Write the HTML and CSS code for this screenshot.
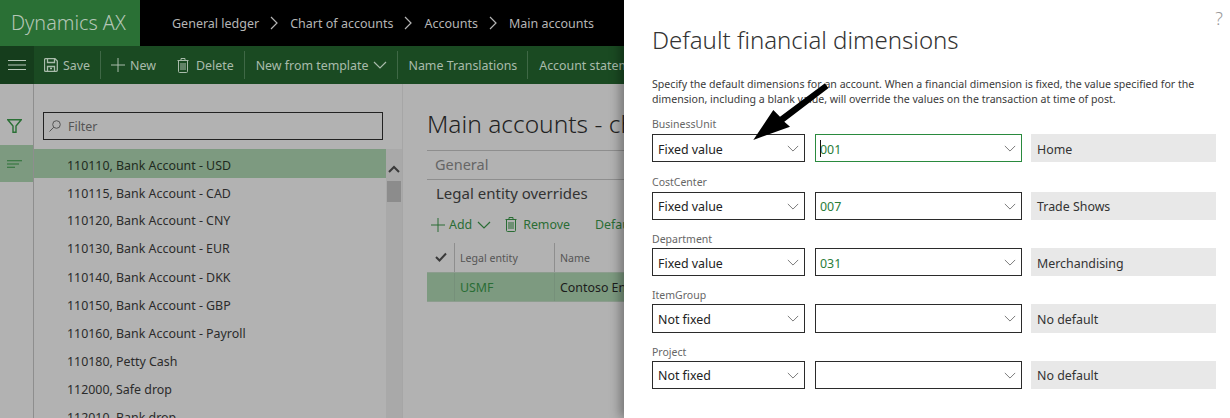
FILE: index.html
```html
<!DOCTYPE html>
<html lang="en">
<head>
<meta charset="utf-8">
<title>Default financial dimensions</title>
<link rel="stylesheet" href="styles.css">
</head>
<body>
<div class="app">
  <header class="topbar">
    <div class="brand">Dynamics AX</div>
    <nav class="crumbs">
      <span>General ledger</span>
      <svg class="crumb-sep" viewBox="0 0 10 14"><path d="M2 1l6 6-6 6"/></svg>
      <span>Chart of accounts</span>
      <svg class="crumb-sep" viewBox="0 0 10 14"><path d="M2 1l6 6-6 6"/></svg>
      <span>Accounts</span>
      <svg class="crumb-sep" viewBox="0 0 10 14"><path d="M2 1l6 6-6 6"/></svg>
      <span>Main accounts</span>
    </nav>
  </header>
  <div class="actionbar">
    <div class="hamburger"><svg viewBox="0 0 18 10"><path d="M0 .5h18M0 5h18M0 9.500h18"/></svg></div>
    <div class="actions">
      <div class="action act-save">
        <svg class="ico ico-save" viewBox="0 0 14 14"><path d="M1.500.7h9.500l2.300 2.300v9.300a1 1 0 0 1-1 1h-10.800a1 1 0 0 1-1-1v-10.600a1 1 0 0 1 1-1zM3.500 1v3.500h7V1M3.500 13.300V8.500h7v4.800M6 10.500h2"/></svg>
        <span>Save</span>
      </div>
      <span class="sep"></span>
      <div class="action act-new">
        <svg class="ico ico-plus" viewBox="0 0 14 14"><path d="M7 0v14M0 7h14"/></svg>
        <span>New</span>
      </div>
      <div class="action act-delete">
        <svg class="ico ico-trash" viewBox="0 0 12 15"><path d="M.5 2.500h11M4 2.500V.5h4v2M1.500 2.500v11a1 1 0 0 0 1 1h7a1 1 0 0 0 1-1v-11M4 5v7M6 5v7M8 5v7"/></svg>
        <span>Delete</span>
      </div>
      <span class="sep"></span>
      <div class="action act-tpl">
        <span>New from template</span>
        <svg class="ico-chev" viewBox="0 0 14 8"><path d="M1 1l6 6 6-6"/></svg>
      </div>
      <span class="sep"></span>
      <div class="action act-name"><span>Name Translations</span></div>
      <span class="sep"></span>
      <div class="action act-stmt"><span>Account statement</span></div>
    </div>
  </div>
  <div class="workspace">
    <aside class="rail">
      <svg class="rail-filter" viewBox="0 0 15 14"><path d="M.8.8h13.400L9 7v6.200H6V7z"/></svg>
      <div class="rail-list"><svg viewBox="0 0 15 8"><path d="M0 .7h15M0 4h12M0 7.300h8"/></svg></div>
    </aside>
    <section class="listpane">
      <div class="filter">
        <svg class="filter-ico" viewBox="0 0 12 12"><circle cx="7.500" cy="4.500" r="3.800"/><path d="M4.800 7.200L.5 11.500"/></svg>
        <span>Filter</span>
      </div>
      <div class="listwrap">
        <ul class="list">
          <li class="sel">110110, Bank Account - USD</li>
          <li>110115, Bank Account - CAD</li>
          <li class="up">110120, Bank Account - CNY</li>
          <li class="up">110130, Bank Account - EUR</li>
          <li>110140, Bank Account - DKK</li>
          <li>110150, Bank Account - GBP</li>
          <li>110160, Bank Account - Payroll</li>
          <li>110180, Petty Cash</li>
          <li>112000, Safe drop</li>
          <li>112010, Bank drop</li>
        </ul>
        <div class="scroll">
          <svg class="scroll-up" viewBox="0 0 12 8"><path d="M1 7l5-5 5 5"/></svg>
          <div class="thumb"></div>
        </div>
      </div>
    </section>
    <main class="content">
      <h1 class="page-title">Main accounts - chart</h1>
      <div class="tab">General</div>
      <div class="tab-title">Legal entity overrides</div>
      <div class="tools">
        <svg class="tool-plus" viewBox="0 0 14 14"><path d="M7 0v14M0 7h14"/></svg>
        <span>Add</span>
        <svg class="tool-chev" viewBox="0 0 14 8"><path d="M1 1l6 6 6-6"/></svg>
        <svg class="tool-trash" viewBox="0 0 12 15"><path d="M.5 2.500h11M4 2.500V.5h4v2M1.500 2.500v11a1 1 0 0 0 1 1h7a1 1 0 0 0 1-1v-11M4 5v7M6 5v7M8 5v7"/></svg>
        <span>Remove</span>
        <span class="tool-def">Default</span>
      </div>
      <div class="grid-head">
        <div class="col-check"><svg viewBox="0 0 12 10"><path d="M1 5l3.500 3.500L11 1.500"/></svg></div>
        <div class="col-le">Legal entity</div>
        <div class="col-name">Name</div>
      </div>
      <div class="grid-row">
        <div class="col-check"></div>
        <div class="col-le usmf">USMF</div>
        <div class="col-name">Contoso Entertainment</div>
      </div>
    </main>
  </div>
</div>

<aside class="panel">
  <div class="help">?</div>
  <h2 class="panel-title">Default financial dimensions</h2>
  <p class="panel-desc">Specify the default dimensions for an account. When a financial dimension is fixed, the value specified for the<br>dimension, including a blank value, will override the values on the transaction at time of post.</p>

  <div class="dim dim-1">
    <label class="dim-label">BusinessUnit</label>
    <div class="dim-fields">
      <div class="sel-box"><span>Fixed value</span><svg class="chev" viewBox="0 0 14 8"><path d="M1 1l6 6 6-6"/></svg></div>
      <div class="sel-box val focus"><i class="caret"></i><span>001</span><svg class="chev" viewBox="0 0 14 8"><path d="M1 1l6 6 6-6"/></svg></div>
      <div class="desc">Home</div>
    </div>
  </div>
  <div class="dim dim-2">
    <label class="dim-label">CostCenter</label>
    <div class="dim-fields">
      <div class="sel-box"><span>Fixed value</span><svg class="chev" viewBox="0 0 14 8"><path d="M1 1l6 6 6-6"/></svg></div>
      <div class="sel-box val"><span>007</span><svg class="chev" viewBox="0 0 14 8"><path d="M1 1l6 6 6-6"/></svg></div>
      <div class="desc">Trade Shows</div>
    </div>
  </div>
  <div class="dim dim-3">
    <label class="dim-label">Department</label>
    <div class="dim-fields">
      <div class="sel-box"><span>Fixed value</span><svg class="chev" viewBox="0 0 14 8"><path d="M1 1l6 6 6-6"/></svg></div>
      <div class="sel-box val"><span>031</span><svg class="chev" viewBox="0 0 14 8"><path d="M1 1l6 6 6-6"/></svg></div>
      <div class="desc">Merchandising</div>
    </div>
  </div>
  <div class="dim dim-4">
    <label class="dim-label">ItemGroup</label>
    <div class="dim-fields">
      <div class="sel-box"><span>Not fixed</span><svg class="chev" viewBox="0 0 14 8"><path d="M1 1l6 6 6-6"/></svg></div>
      <div class="sel-box val"><span></span><svg class="chev" viewBox="0 0 14 8"><path d="M1 1l6 6 6-6"/></svg></div>
      <div class="desc">No default</div>
    </div>
  </div>
  <div class="dim dim-5">
    <label class="dim-label">Project</label>
    <div class="dim-fields">
      <div class="sel-box"><span>Not fixed</span><svg class="chev" viewBox="0 0 14 8"><path d="M1 1l6 6 6-6"/></svg></div>
      <div class="sel-box val"><span></span><svg class="chev" viewBox="0 0 14 8"><path d="M1 1l6 6 6-6"/></svg></div>
      <div class="desc">No default</div>
    </div>
  </div>
</aside>

<svg class="arrow" viewBox="0 0 90 70"><path d="M73 1.300L76.300 6.300L32.300 39.700L38 44.700L1.300 58L21.300 28L28 34.700Z"/></svg>
</body>
</html>
```

FILE: styles.css
```css
* { box-sizing: border-box; }
html, body { margin: 0; padding: 0; height: 100%; }
body {
  width: 1230px;
  height: 418px;
  overflow: hidden;
  position: relative;
  font-family: "Noto Sans", "Open Sans", sans-serif;
  font-size: 12.400px;
  background: #b2b2b2;
  color: #2b2b2b;
}
svg { display: block; fill: none; stroke: currentColor; }

.app { display: flex; flex-direction: column; height: 418px; }

.topbar { display: flex; height: 46px; background: #000; flex: none; }
.brand {
  width: 140px;
  background: #2a7035;
  color: #b4c6b6;
  font-size: 19.800px;
  font-weight: 300;
  padding-left: 11px;
  line-height: 46px;
}
.crumbs {
  display: flex;
  align-items: center;
  padding-left: 32px;
  color: #b5b5b5;
  font-size: 12.500px;
}
.crumb-sep { width: 10px; height: 14px; margin: 0 11px 0 10px; color: #b5b5b5; stroke-width: 1.200; }

.actionbar { display: flex; height: 38px; background: #1a4a22; color: #a9bbab; flex: none; }
.hamburger {
  width: 34px;
  background: #153d1c;
  display: flex;
  align-items: center;
  justify-content: center;
  color: #b8c8ba;
}
.hamburger svg { width: 18px; height: 10px; stroke-width: 1; }
.actions { display: flex; align-items: center; flex: 1; padding-left: 10px; white-space: nowrap; }
.action { display: flex; align-items: center; gap: 5px; margin-left: 11px; }
.act-save { margin-left: 0; }
.act-new { margin-left: 10px; }
.act-delete { margin-left: 21px; }
.act-name { margin-left: 10px; }
.ico { width: 14px; height: 15px; stroke-width: 1; }
.ico-save { height: 14px; stroke-width: 1.300; }
.ico-plus { width: 14px; height: 14px; }
.ico-trash { width: 12px; margin-right: 2px; }
.ico-chev { width: 14px; height: 8px; stroke-width: 1.200; }
.sep { width: 1px; height: 28px; background: #3f6846; margin-left: 10px; }

.workspace { display: flex; flex: 1; min-height: 0; overflow: hidden; }

.rail {
  width: 34px;
  flex: none;
  border-right: 1px solid #8e8e8e;
  background: #b2b2b2;
  color: #2a7035;
  padding-top: 35px;
}
.rail-filter { width: 15px; height: 14px; margin-left: 7px; stroke-width: 1.400; }
.rail-list {
  margin-top: 12px;
  height: 37px;
  background: #7d9a80;
  display: flex;
  align-items: center;
  padding-left: 7px;
}
.rail-list svg { width: 15px; height: 8px; stroke-width: 1.100; }

.listpane { width: 369px; flex: none; padding-top: 28px; display: flex; flex-direction: column; border-right: 1px solid #a6a6a6; }
.filter {
  margin-left: 9px;
  width: 340px;
  height: 28px;
  border: 1px solid #222;
  display: flex;
  align-items: center;
  gap: 7px;
  padding-left: 5px;
  color: #555;
}
.filter-ico { width: 12px; height: 12px; stroke-width: 1; }

.listwrap { display: flex; margin-top: 9px; flex: 1; min-height: 0; }
.list { list-style: none; margin: 0; padding: 0; flex: 1; min-width: 0; }
.list li { height: 28px; line-height: 31px; padding-left: 33px; color: #2b2b2b; white-space: nowrap; }
.list li.up { line-height: 29px; }
.list li.sel { height: 29px; line-height: 33px; background: #7d9a80; color: #1f2b20; }
.scroll { width: 16px; flex: none; background: #a9a9a9; padding: 16px 1px 0; color: #3a3a3a; }
.scroll-up { width: 12px; height: 8px; margin: 0 auto; stroke-width: 2; }
.thumb { height: 21px; margin-top: 8px; background: #8c8c8c; }

.content { flex: 1; min-width: 0; padding: 24px 0 0 24px; overflow: hidden; white-space: nowrap; }
.page-title { margin: 0; font-weight: 300; font-size: 24.500px; line-height: 32px; color: #222; height: 42px; }
.tab {
  height: 30px;
  border-top: 1px solid #8e8e8e;
  border-bottom: 1px solid #8e8e8e;
  line-height: 27px;
  padding-left: 8px;
  font-size: 14.500px;
  color: #666;
}
.tab-title { height: 28px; line-height: 27px; padding-left: 9px; font-size: 15px; color: #333; }
.tools { display: flex; align-items: center; height: 35px; padding: 0 0 2px 4px; color: #2a6d35; }
.tool-plus { width: 14px; height: 14px; margin-right: 4px; stroke-width: 1; }
.tool-chev { width: 14px; height: 8px; margin-left: 5px; stroke-width: 1.200; }
.tool-trash { width: 12px; height: 15px; margin: 0 6px 0 14px; stroke-width: 1; }
.tool-def { margin-left: 25px; }
.grid-head, .grid-row { display: flex; width: 600px; }
.grid-head { height: 29px; font-size: 10.600px; color: #555; }
.grid-head > div { height: 29px; line-height: 30px; }
.grid-row { height: 30px; background: #7d9a80; border-top: 1px solid #8c9d8e; border-bottom: 1px solid #8c9d8e; line-height: 29px; color: #1c1c1c; }
.col-check { width: 28px; flex: none; border-right: 1px solid #8e8e8e; padding: 9px 0 0 8px; color: #3a3a3a; }
.col-check svg { width: 12px; height: 10px; stroke-width: 2; }
.col-le { width: 100px; flex: none; border-right: 1px solid #8e8e8e; padding-left: 5px; }
.grid-row .col-check, .grid-row .col-le { border-right-color: #76907a; }
.col-name { padding-left: 5px; }
.usmf { color: #2a6d35; }

.panel {
  position: absolute;
  top: 0;
  left: 624px;
  width: 606px;
  height: 418px;
  background: #fff;
  box-shadow: -4px 0 10px rgba(0, 0, 0, .35);
  padding: 22px 0 0 28px;
  color: #2b2b2b;
}
.help { position: absolute; right: 7px; top: 6px; font-size: 18px; line-height: 25px; font-weight: 300; color: #999; }
.panel-title { margin: 0; font-weight: 300; font-size: 24px; line-height: 36px; color: #333; }
.panel-desc { margin: 19px 0 0; white-space: nowrap; font-size: 10.600px; line-height: 15px; color: #3a3a3a; }
.dim { display: flex; flex-direction: column; margin-top: 11px; }
.dim-1 { margin-top: 10px; }
.dim-2 { margin-top: 13px; }
.dim-label { height: 17px; font-size: 10.500px; line-height: 14px; color: #666; }
.dim-3 .dim-label, .dim-4 .dim-label, .dim-5 .dim-label { line-height: 16px; }
.dim-fields { display: flex; height: 28px; }
.dim-4 .dim-fields { height: 29px; }
.sel-box {
  position: relative;
  width: 153px;
  height: 100%;
  border: 1px solid #2b2b2b;
  display: flex;
  align-items: center;
  padding: 1px 0 0 5px;
  color: #222;
}
.dim-1 .sel-box, .dim-3 .sel-box { padding-top: 3px; }
.sel-box.val { width: 207px; margin-left: 10px; color: #2a7d3a; padding-left: 4px; }
.sel-box.focus { border-color: #2a8a3e; }
.caret { position: absolute; left: 4px; top: 5px; width: 1px; height: 17px; background: #111; }
.chev { position: absolute; right: 5px; top: 10px; width: 12px; height: 7px; color: #666; stroke-width: 1; }
.desc {
  width: 185px;
  margin-left: 9px;
  background: #e8e8e8;
  line-height: 30px;
  padding-left: 6px;
  color: #333;
}
.dim-1 .desc, .dim-3 .desc, .dim-4 .desc { line-height: 32px; }

.arrow { position: absolute; left: 752px; top: 82px; width: 90px; height: 70px; }
.arrow path { fill: #000; stroke: none; }
```
